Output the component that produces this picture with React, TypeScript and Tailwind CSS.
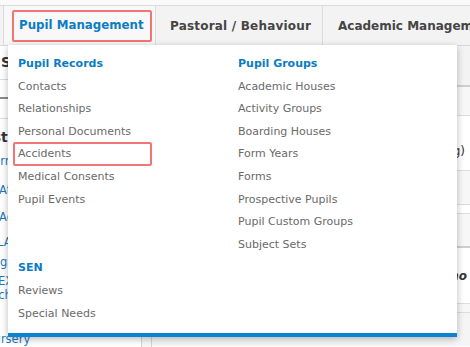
const recordItems = ["Contacts", "Relationships", "Personal Documents", "Accidents", "Medical Consents", "Pupil Events"];
const groupItems = [
  "Academic Houses",
  "Activity Groups",
  "Boarding Houses",
  "Form Years",
  "Forms",
  "Prospective Pupils",
  "Pupil Custom Groups",
  "Subject Sets",
];
const senItems = ["Reviews", "Special Needs"];

function MenuGroup({ title, items, marked, className = "" }: { title: string; items: string[]; marked?: string; className?: string }) {
  return (
    <div className={className}>
      <div className="h-[22.6px] leading-[22.6px] font-bold text-[#0b7cc3]">{title}</div>
      {items.map((item) => (
        <div key={item} className="relative h-[22.6px] leading-[22.6px] text-[#6a6a6a] whitespace-nowrap">
          {item}
          {/* annotation box */}
          {item === marked && <span className="absolute left-[-5px] top-[-1px] w-[139px] h-[24px] border-2 border-[#f27474] rounded-[2px]" />}
        </div>
      ))}
    </div>
  );
}

export default function App() {
  return (
    <div className="relative w-[470px] h-[347px] overflow-hidden bg-white font-['DejaVu_Sans',Verdana,sans-serif] text-[11px]">
      {/* top strip */}
      <div className="h-[6px] bg-[#fafafa] border-b border-[#dcdcdc]" />

      {/* nav tabs */}
      <div className="flex h-[40px] bg-[#f3f3f3] border-b border-[#d8d8d8] text-[12px] font-bold whitespace-nowrap">
        <div className="w-[4px] border-r border-[#dcdcdc]" />
        <div className="relative w-[152px] flex items-center pt-[1px] pl-[15px] bg-[#f8f8f8] text-[#0b7dc4] border-r border-[#dcdcdc]">
          <span className="text-[11.8px]">Pupil Management</span>
          <span className="absolute left-[8px] top-[4px] w-[140px] h-[32px] border-2 border-[#f27474] rounded-[2px]" />
        </div>
        <div className="w-[167px] flex items-center pt-[1px] pl-[14px] text-[#454545] border-r border-[#dcdcdc] tracking-[0.2px]">Pastoral / Behaviour</div>
        <div className="flex-1 flex items-center pt-[1px] pl-[15px] text-[#454545] overflow-hidden">Academic Management</div>
      </div>

      {/* page body behind the menu */}
      <div className="flex h-[301px]">
        <div className="w-[142px] border-r border-[#d4d4d4] bg-white overflow-hidden whitespace-nowrap">
          <div className="h-[34px] flex items-center border-b border-[#dddddd] text-[14px] font-bold text-[#333] pl-[1px]">Search</div>
          <div className="h-[19px] border-b-2 border-[#8a8a8a]" />
          <div className="h-[20px] border-b border-[#dddddd]" />
          <div className="h-[36px] flex items-center text-[14px] font-bold text-[#333] ml-[-21px]">List</div>
          <div className="text-[#1a78bf] text-[11.5px] leading-[12px]">
            <div className="h-[12px] ml-[-31px]">Modern Languages</div>
            <div className="h-[12px] mt-[17px] ml-[-1px]">Attendance</div>
            <div className="h-[12px] mt-[15px] ml-[-1px]">Achievement</div>
            <div className="h-[12px] mt-[13px] ml-[-3px]">LAC Register</div>
            <div className="h-[12px] mt-[8px] ml-[-21px]">Religious Studies</div>
            <div className="h-[12px] mt-[7px] ml-[-2px]">EXAMS</div>
            <div className="h-[12px] mt-[2px] ml-[-21px]">Teachers</div>
            <div className="h-[12px] mt-[32px] ml-[-15px]">Nursery</div>
          </div>
        </div>
        <div className="w-[10px] border-r border-[#d4d4d4] bg-[#f7f7f7]" />
        <div className="flex-1 overflow-hidden whitespace-nowrap text-[12px] text-[#333]">
          <div className="h-[41px] bg-[#f3f3f3] border-b-2 border-[#cfcfcf]" />
          <div className="h-[29px] bg-[#f7f7f7] border-b border-[#dddddd]" />
          <div className="h-[55px] bg-white border-b border-[#dddddd] pt-[28px] pr-[5px] text-right leading-[14px]">Nursery (Young)</div>
          <div className="h-[34px] bg-[#f7f7f7] border-b border-[#dddddd]" />
          <div className="h-[9px] bg-white border-b border-[#dddddd]" />
          <div className="h-[34px] bg-[#f7f7f7] border-b-2 border-[#cfcfcf]" />
          <div className="h-[56px] bg-white border-b border-[#dddddd] flex items-center pl-[285px] italic font-bold">Who is responsible</div>
          <div className="h-[9px] bg-[#f7f7f7] border-b border-[#dddddd]" />
          <div className="h-[33px] bg-[#f5f5f5]" />
        </div>
      </div>

      {/* dropdown menu */}
      <div className="absolute left-[8px] top-[45px] w-[449px] h-[292px] bg-white border-b-4 border-[#0a84d0] shadow-[0_2px_7px_rgba(0,0,0,0.28)] pl-[10px] pt-[8px]">
        <div className="grid grid-cols-[220px_220px]">
          <MenuGroup title="Pupil Records" items={recordItems} marked="Accidents" />
          <MenuGroup title="Pupil Groups" items={groupItems} />
          <MenuGroup title="SEN" items={senItems} className="mt-[1px]" />
        </div>
      </div>
    </div>
  );
}
